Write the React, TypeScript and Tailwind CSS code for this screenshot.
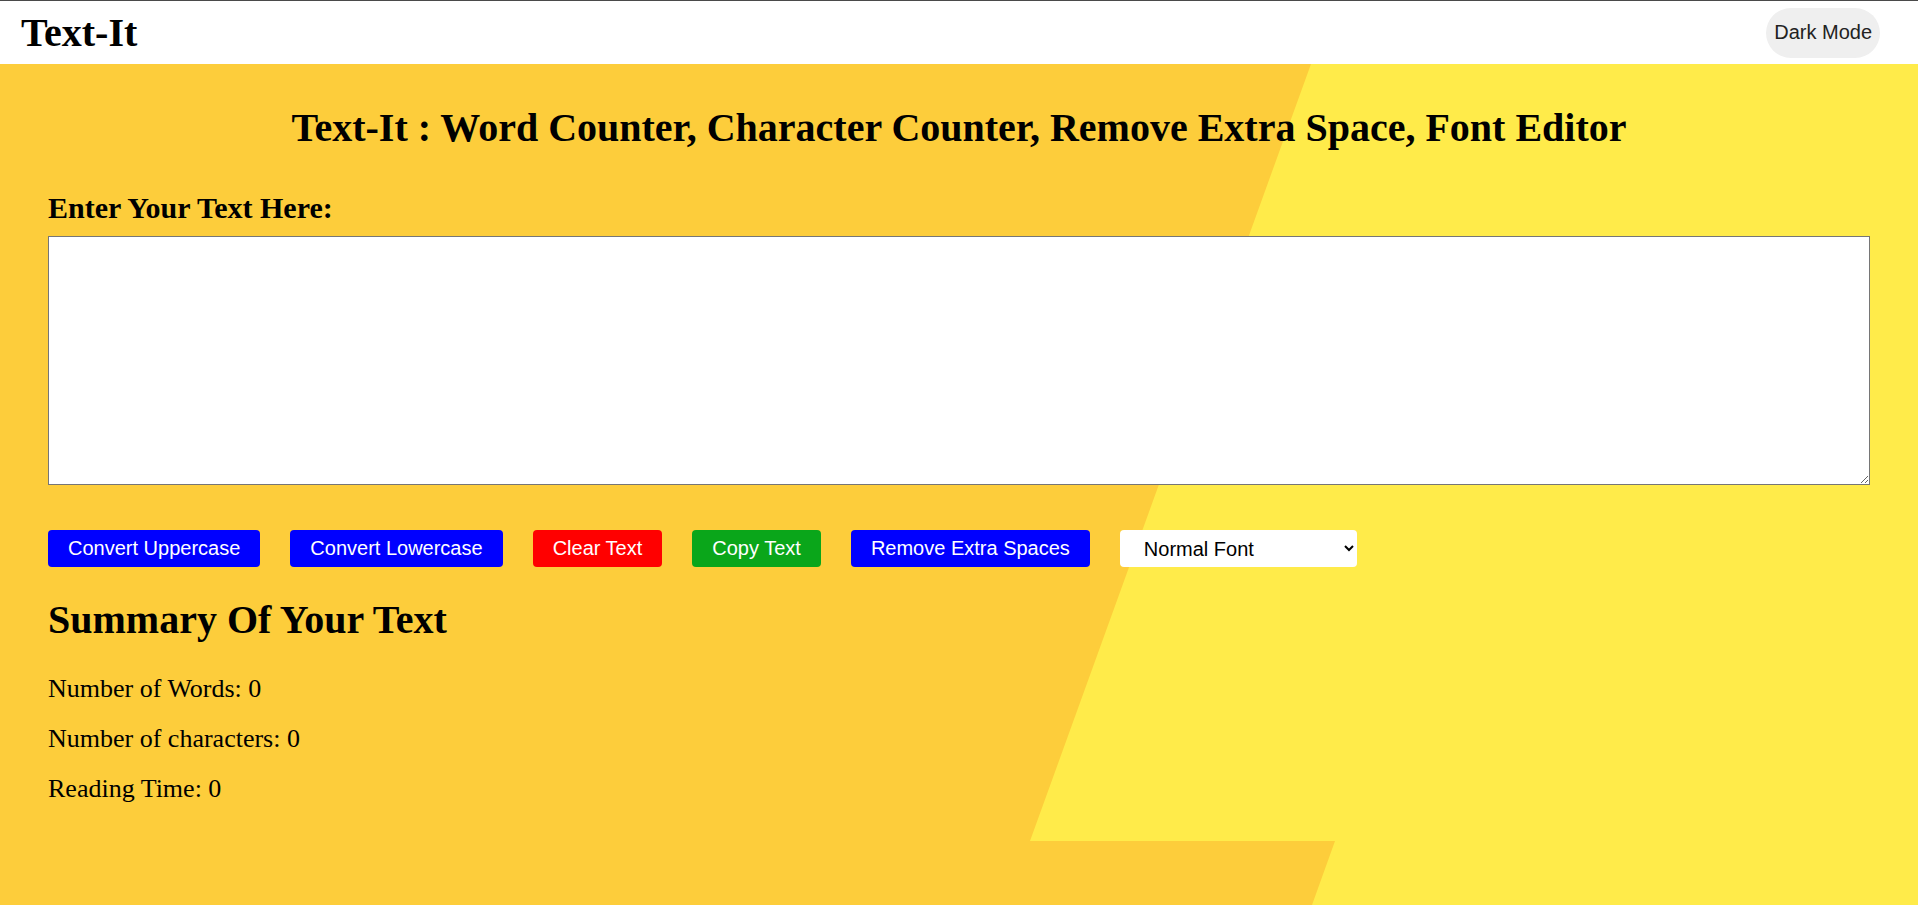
import { useState } from "react";

const App = () => {
  const [text, setText] = useState("");
  const words = text.split(/\s+/).filter((w) => w.length > 0).length;

  return (
    <div className="min-h-screen font-['Liberation_Serif','Times_New_Roman',serif] text-black">
      {/* navbar */}
      <nav className="h-16 border-t border-[#4a4a4a] bg-white flex items-center justify-between pl-[21px] pr-[38px]">
        <span className="text-[40px] font-bold leading-[44px]">Text-It</span>
        <button className="h-[50px] rounded-full bg-[#efefef] px-2 text-[20px] leading-[23px] text-[#222] font-['Liberation_Sans',Arial,sans-serif]">
          Dark Mode
        </button>
      </nav>

      <main className="relative h-[841px] overflow-hidden">
        <svg
          className="absolute inset-0 h-full w-full"
          viewBox="0 0 1918 841"
          preserveAspectRatio="none"
        >
          <rect width="1918" height="841" fill="#FFEB4A" />
          <polygon
            points="0,0 1311,0 1030,777 1335,777 1312,841 0,841"
            fill="#FDCD3B"
          />
        </svg>

        <div className="relative px-12 pt-[42px]">
          <h1 className="text-center text-[40px] font-bold leading-[44px]">
            Text-It : Word Counter, Character Counter, Remove Extra Space, Font
            Editor
          </h1>

          <p className="mt-[41px] text-[30px] font-bold leading-[33px]">
            Enter Your Text Here:
          </p>
          <textarea
            value={text}
            onChange={(e) => setText(e.target.value)}
            className="mt-3 block h-[249px] w-full border border-[#767676] bg-white"
          />

          <div className="mt-[45px] flex items-center gap-[30px] font-['Liberation_Sans',Arial,sans-serif] text-[20px] leading-[23px]">
            <button
              onClick={() => setText(text.toUpperCase())}
              className="h-[37px] rounded-[4px] bg-[#0000ff] px-5 text-white"
            >
              Convert Uppercase
            </button>
            <button
              onClick={() => setText(text.toLowerCase())}
              className="h-[37px] rounded-[4px] bg-[#0000ff] px-5 text-white"
            >
              Convert Lowercase
            </button>
            <button
              onClick={() => setText("")}
              className="h-[37px] rounded-[4px] bg-[#ff0000] px-5 text-white"
            >
              Clear Text
            </button>
            <button className="h-[37px] rounded-[4px] bg-[#0aa61a] px-5 text-white">
              Copy Text
            </button>
            <button
              onClick={() => setText(text.split(/[ ]+/).join(" "))}
              className="h-[37px] rounded-[4px] bg-[#0000ff] px-5 text-white"
            >
              Remove Extra Spaces
            </button>
            <select className="h-[37px] w-[237px] rounded-[4px] bg-white pl-5 pr-1 text-black">
              <option>Normal Font</option>
              <option>Bold Font</option>
              <option>Italic Font</option>
            </select>
          </div>

          <h2 className="mt-[31px] text-[40px] font-bold leading-[44px]">
            Summary Of Your Text
          </h2>
          <div className="mt-[32px] flex flex-col gap-[20px] text-[26px] leading-[30px]">
            <p>Number of Words: {words}</p>
            <p>Number of characters: {text.length}</p>
            <p>Reading Time: {Math.round(words * 0.008 * 100) / 100}</p>
          </div>
        </div>
      </main>
    </div>
  );
};

export default App;
